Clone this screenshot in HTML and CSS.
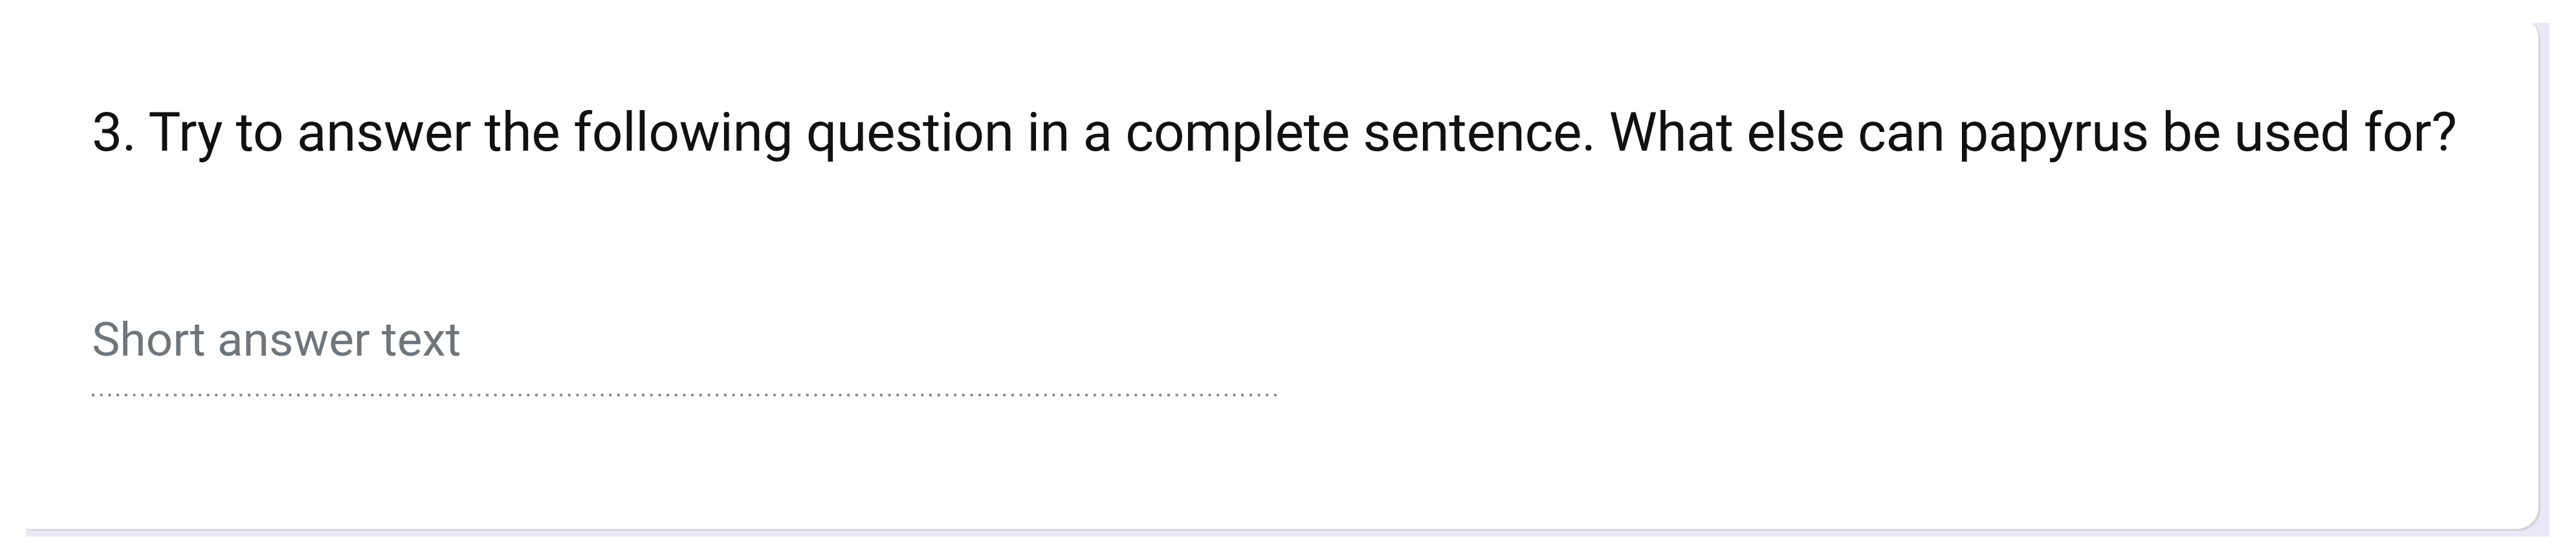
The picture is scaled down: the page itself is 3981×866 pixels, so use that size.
FILE: index.html
```html
<!DOCTYPE html>
<html lang="en">
<head>
<meta charset="utf-8">
<title>Question 3</title>
<link rel="stylesheet" href="styles.css">
</head>
<body>
  <div class="frame">
    <div class="card">
      <div class="question">3. Try to answer the following question in a complete sentence. What else can papyrus be used for?</div>
      <div class="answer">Short answer text</div>
      <div class="dots"></div>
    </div>
  </div>
</body>
</html>
```
FILE: styles.css
```css
html, body {
  margin: 0;
  padding: 0;
  background: #ffffff;
}
body {
  width: 3981px;
  height: 866px;
  overflow: hidden;
  font-family: Roboto, "Liberation Sans", Arial, sans-serif;
}
.frame {
  margin-left: 40px;
  margin-top: 35px;
  width: 3900px;
  height: 795px;
  background: #ece9f6;
  overflow: hidden;
}
.card {
  margin-top: -10px;
  width: 3883px;
  height: 793px;
  box-sizing: border-box;
  background: #ffffff;
  border-radius: 0 34px 34px 6px;
  box-shadow: 3px 3px 2px #d2d3d8;
  padding: 130px 0 0 102px;
  display: flex;
  flex-direction: column;
}
.question {
  font-size: 84px;
  line-height: 100px;
  letter-spacing: -0.4px;
  color: #111111;
  white-space: nowrap;
}
.answer {
  margin-top: 228px;
  font-size: 73px;
  line-height: 84px;
  color: #70757a;
}
.dots {
  margin-top: 42px;
  width: 1832px;
  height: 4px;
  background-image: linear-gradient(to right, #8a8a8a 0, #8a8a8a 4px, transparent 4px);
  background-size: 12.7px 4px;
  background-repeat: repeat-x;
}
```
